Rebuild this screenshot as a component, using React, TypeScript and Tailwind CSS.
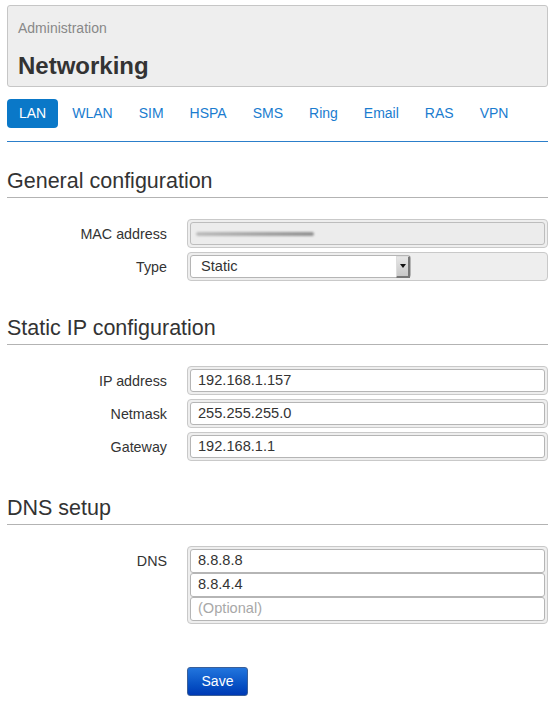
import React from 'react';

const font = { fontFamily: '"Liberation Sans", Arial, sans-serif' };

const tabs = ['LAN', 'WLAN', 'SIM', 'HSPA', 'SMS', 'Ring', 'Email', 'RAS', 'VPN'];

function SectionTitle({ children, first }: { children: React.ReactNode; first?: boolean }) {
  return (
    <div
      className={`${first ? 'mt-[25px]' : 'mt-[33px]'} border-b border-[#b3b3b3] pb-[2px] text-[21.5px] leading-[28px] text-[#333]`}
    >
      {children}
    </div>
  );
}

function Row({ label, children }: { label: string; children: React.ReactNode }) {
  return (
    <div className="flex items-start">
      <div className="w-[160px] shrink-0 pt-[5px] text-right text-[14.3px] leading-[20px] text-[#333]">
        {label}
      </div>
      <div className="ml-[20px] flex-1 rounded-[4px] border border-[#c9c9c9] bg-[#eeeeee] p-[2px]">
        {children}
      </div>
    </div>
  );
}

function TextBox({ value, placeholder, tall }: { value?: string; placeholder?: string; tall?: boolean }) {
  return (
    <div
      className={`flex ${tall ? 'h-[24px]' : 'h-[23px]'} items-center rounded-[3px] border border-[#b5b5b5] bg-white px-[7px] text-[14.6px] text-[#333]`}
    >
      {value ? value : <span className="text-[#a8a8a8]">{placeholder}</span>}
    </div>
  );
}

export default function App() {
  return (
    <div className="min-h-[703px] bg-white px-[7px] pt-[5px]" style={font}>
      <div className="rounded-[3px] border border-[#c6c6c6] bg-[#eeeeee] px-[10px] pb-[4px] pt-[12px]">
        <div className="text-[14px] leading-[20px] text-[#888]">Administration</div>
        <div className="mt-[12px] text-[24px] font-bold leading-[32px] text-[#333]">Networking</div>
      </div>

      <div className="mt-[12px] flex gap-[2px] border-b border-[#2c7fca] pb-[13px]">
        {tabs.map((t, i) => (
          <div
            key={t}
            className={`flex h-[29px] items-center rounded-[4px] px-[12px] text-[14px] ${
              i === 0 ? 'bg-[#0a78c8] text-white' : 'text-[#1a7ccf]'
            }`}
          >
            {t}
          </div>
        ))}
      </div>

      <SectionTitle first>General configuration</SectionTitle>
      <div className="mt-[21px] flex flex-col gap-[4px]">
        <Row label="MAC address">
          <div className="flex h-[23px] items-center rounded-[3px] border border-[#bdbdbd] bg-[#ececec] px-[5px]">
            <div className="h-[4px] w-[118px] rounded-full bg-gradient-to-r from-[#b0b0b0] to-[#7a7a7a] opacity-80 blur-[1.2px]" />
          </div>
        </Row>
        <Row label="Type">
          <div className="flex h-[23px] w-[221px] items-center justify-between rounded-[3px] border border-[#b5b5b5] bg-white pl-[10px] text-[14.6px] text-[#333]">
            <span>Static</span>
            <div className="flex h-[22px] w-[14px] items-center justify-center border-b-2 border-r-2 border-l border-t border-b-[#777] border-r-[#777] border-l-[#ddd] border-t-[#ddd] bg-gradient-to-b from-[#e6e6e6] to-[#c8c8c8]">
              <svg width="6" height="4" viewBox="0 0 6 4">
                <path d="M0 0h6L3 4z" fill="#111" />
              </svg>
            </div>
          </div>
        </Row>
      </div>

      <SectionTitle>Static IP configuration</SectionTitle>
      <div className="mt-[21px] flex flex-col gap-[4px]">
        <Row label="IP address">
          <TextBox value="192.168.1.157" />
        </Row>
        <Row label="Netmask">
          <TextBox value="255.255.255.0" />
        </Row>
        <Row label="Gateway">
          <TextBox value="192.168.1.1" />
        </Row>
      </div>

      <SectionTitle>DNS setup</SectionTitle>
      <div className="mt-[21px]">
        <Row label="DNS">
          <div className="flex flex-col">
            <TextBox tall value="8.8.8.8" />
            <TextBox tall value="8.8.4.4" />
            <TextBox tall placeholder="(Optional)" />
          </div>
        </Row>
      </div>

      <div className="ml-[180px] mt-[43px]">
        <button className="h-[29px] w-[61px] rounded-[3px] border border-[#3a5f98] bg-gradient-to-b from-[#2275dd] to-[#0039b5] text-[14px] text-white">
          Save
        </button>
      </div>
    </div>
  );
}
